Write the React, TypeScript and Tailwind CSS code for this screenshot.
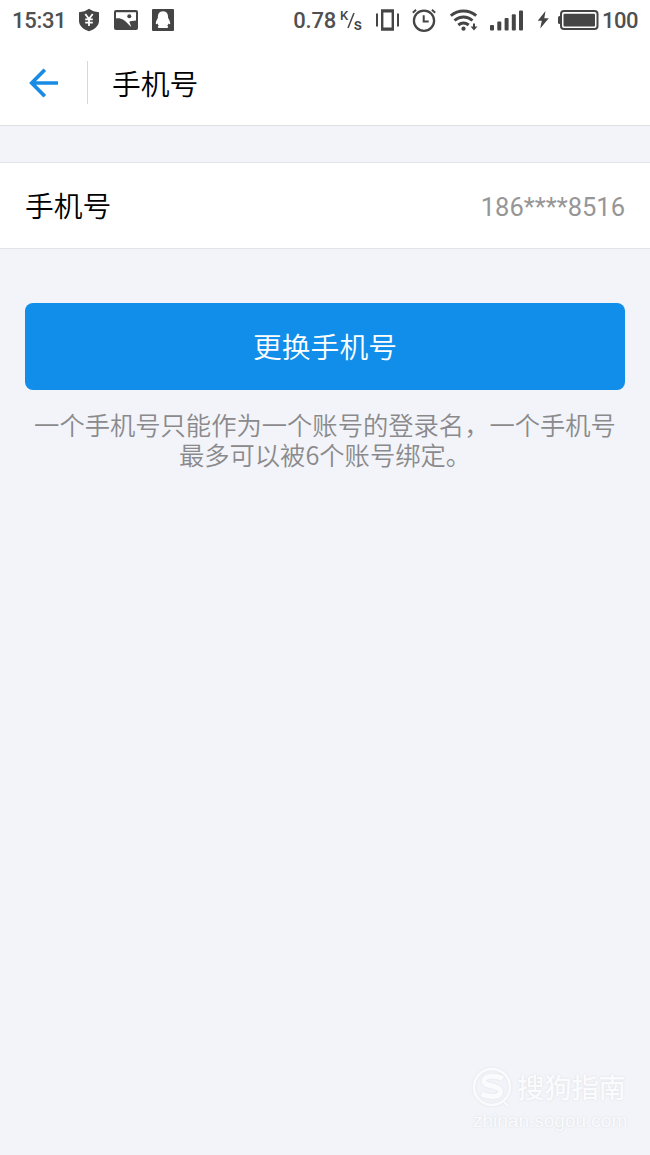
import type { ReactNode } from "react";

function ShieldIcon() {
  return (
    <svg className="ml-[11px] h-[24px] w-[22px]" viewBox="0 0 22 24" fill="none">
      <path d="M11 .8C8.500 2.800 4.600 4 1 4.200V13c0 5.200 5 8.600 10 10.300C16 21.600 21 18.200 21 13V4.200C17.400 4 13.500 2.800 11 .8Z" fill="#454545" />
      <path d="m7.300 6 3.700 5 3.700-5M7.200 11.400h7.600M7.200 14.600h7.600M11 11v7" stroke="#fff" strokeWidth="1.800" />
    </svg>
  );
}

function PictureIcon() {
  return (
    <svg className="ml-[14px] h-[20px] w-[24px]" viewBox="0 0 24 20">
      <rect width="24" height="20" rx="2" fill="#454545" />
      <path d="M2 2.300h20v8.200l-6 .8c-.8.700-.5 1.300 0 2.300l1.200 3.400C14.500 14.800 13 12 9.800 10 7 8.300 4.500 8 2 8.400Z" fill="#fff" />
      <circle cx="15.300" cy="6.300" r="2" fill="#454545" />
    </svg>
  );
}

function PenguinIcon() {
  return (
    <svg className="ml-[14px] h-[22px] w-[22px]" viewBox="0 0 22 22">
      <rect width="22" height="22" rx="1" fill="#454545" />
      <path d="M11 2.200c-3.700 0-5.300 2.800-5.100 6.600-.9 1.800-2.100 3.900-2.100 5.500 0 1.200.6 1.400 1.700.3.300.9.700 1.600 1.300 2.200-1.300.6-1.500 2.200.4 2.200h7.600c1.900 0 1.700-1.600.4-2.200.6-.6 1-1.300 1.300-2.200 1.100 1.100 1.700.9 1.700-.3 0-1.600-1.200-3.700-2.100-5.500.2-3.800-1.400-6.600-5.100-6.600Z" fill="#fff" />
    </svg>
  );
}

function RateUnit() {
  return (
    <svg className="ml-[4px] h-[24px] w-[23px]" viewBox="0 0 23 24" fontFamily="Roboto, sans-serif" fontWeight="500" fill="#454545">
      <text x="0" y="11.500" fontSize="13">K</text>
      <path d="m8 20 6-15" stroke="#454545" strokeWidth="1.500" />
      <text x="13.700" y="21.500" fontSize="16">s</text>
    </svg>
  );
}

function VibrateIcon() {
  return (
    <svg className="ml-[13px] h-[22px] w-[23px]" viewBox="0 0 23 22" fill="none" stroke="#454545">
      <path d="M1 4.500v13M22 4.500v13" strokeWidth="2" />
      <path d="M5 1.900h13M5 20.100h13" strokeWidth="3.400" />
      <path d="M6.200 1v20M16.800 1v20" strokeWidth="2.400" />
    </svg>
  );
}

function AlarmIcon() {
  return (
    <svg className="ml-[12px] h-[25px] w-[26px]" viewBox="0 0 26 25" fill="none" stroke="#454545">
      <circle cx="13" cy="12.700" r="10.100" strokeWidth="2.300" />
      <path d="M12.700 7.200v6.200h5" strokeWidth="2" />
      <path d="m1.800 4.800 3.300-3M24.200 4.800l-3.300-3" strokeWidth="1.900" />
    </svg>
  );
}

function WifiIcon() {
  return (
    <svg className="ml-[13px] h-[24px] w-[29px]" viewBox="0 0 29 24" fill="none" stroke="#454545">
      <path d="M.8 7.700c7.500-6.300 17.900-6.300 25.400 0" strokeWidth="2.900" />
      <path d="M4.500 12.500c5.400-4.700 12.600-4.700 18 0" strokeWidth="2.900" />
      <path d="M8.300 17c3.200-2.600 7.200-2.600 10.400 0" strokeWidth="2.900" />
      <circle cx="13.500" cy="20.700" r="2.100" fill="#454545" stroke="none" />
      <path d="M24 15.500v5" strokeWidth="2" />
      <path d="M20.600 18.500h6.800L24 22.500Z" fill="#454545" stroke="none" />
    </svg>
  );
}

function SignalIcon() {
  return (
    <svg className="ml-[11px] h-[21px] w-[34px]" viewBox="0 0 34 21" fill="#454545">
      <rect x="0" y="15" width="4" height="5.500" rx="1" />
      <rect x="7.300" y="11.500" width="4" height="9" rx="1" />
      <rect x="14.600" y="8" width="4" height="12.500" rx="1" />
      <rect x="21.800" y="4.200" width="4" height="16.300" rx="1" />
      <rect x="29" y=".5" width="4" height="20" rx="1" />
    </svg>
  );
}

function BatteryIcon() {
  return (
    <svg className="ml-[13px] h-[22px] w-[62px]" viewBox="0 0 62 22" fill="#454545">
      <path d="M8.500 2 .7 11.800h4.100L3.200 19.500 11.800 9.200H7.300Z" />
      <rect x="21" y="7" width="4" height="8" rx="1.500" />
      <rect x="24" y="2" width="36.500" height="18" rx="3" fill="#fff" stroke="#454545" strokeWidth="2" />
      <rect x="26.500" y="4.800" width="31.500" height="12.600" rx="1" />
    </svg>
  );
}

function StatusBar() {
  return (
    <div className="flex h-10 items-center pl-[12px] font-[Roboto,sans-serif] text-[22px] font-medium leading-none text-[#505050]">
      <span className="w-[55px] pt-px tracking-[-0.3px]">15:31</span>
      <ShieldIcon />
      <PictureIcon />
      <PenguinIcon />
      <span className="ml-auto pt-px tracking-[-0.200px]">0.78</span>
      <RateUnit />
      <VibrateIcon />
      <AlarmIcon />
      <WifiIcon />
      <SignalIcon />
      <BatteryIcon />
      <span className="ml-[3px] mr-[12px] w-[36px] pt-px tracking-[-0.500px]">100</span>
    </div>
  );
}

function Header({ children }: { children: ReactNode }) {
  return (
    <header className="flex h-[86px] items-center border-b border-[#dedfe1] pl-[29px]">
      <svg className="h-[30px] w-[30px]" viewBox="0 0 30 30" fill="none" stroke="#188ce4" strokeWidth="3.700">
        <path d="M15.800 1.700 2.700 15l13.100 13.300M3 15h26" />
      </svg>
      <div className="ml-[28px] h-[43px] w-px bg-[#d8d8d8]" />
      <h1 className="ml-[24px] text-[28.800px] font-[350]">{children}</h1>
    </header>
  );
}

function Watermark() {
  return (
    <div className="ml-auto mr-[22px] w-[156px] text-[#fafbfd] [text-shadow:0_0_2px_#d6d8dd]">
      <div className="flex items-center">
        <svg className="h-[40px] w-[40px] overflow-visible drop-shadow-[0_0_1px_#dfe1e6]" viewBox="0 0 40 40" fill="none" stroke="#fafbfd">
          <circle cx="20" cy="20" r="18" strokeWidth="2.500" />
          <path d="M31 11.500c-8-3.500-19-3-19 2.500 0 6 16.500 4 16.500 10.500 0 6-10.500 6.500-19 2.500" strokeWidth="5" />
          <path d="m32 35 4 4" strokeWidth="2" />
        </svg>
        <span className="ml-[5px] -mt-[2px] whitespace-nowrap text-[27.500px] font-medium leading-[40px] tracking-[-0.300px]">搜狗指南</span>
      </div>
      <div className="ml-px mt-[2px] whitespace-nowrap font-['Liberation_Sans',sans-serif] text-[19px] leading-[24px]">zhinan.sogou.com</div>
    </div>
  );
}

export default function App() {
  return (
    <div className="flex h-[1155px] w-[650px] flex-col overflow-hidden bg-[#f3f4f9] font-['Noto_Sans_CJK_SC',sans-serif] text-black">
      <div className="bg-white">
        <StatusBar />
        <Header>手机号</Header>
      </div>
      <main className="flex flex-1 flex-col pt-[36px]">
        <section className="flex h-[87px] items-center justify-between border-y border-[#e3e4e7] bg-white px-[25px]">
          <span className="pb-[2px] text-[28.800px] font-[350]">手机号</span>
          <span className="pt-[3px] font-[Roboto,sans-serif] text-[25.500px] font-normal text-[#969696]">186****8516</span>
        </section>
        <button className="mx-[25px] mt-[54px] h-[87px] rounded-lg bg-[#108ee9] pb-[2px] text-[28.800px] font-[350] text-white">更换手机号</button>
        <p className="mt-[19px] text-center text-[25.300px] font-[350] leading-[30px] text-[#8a8a8c]">
          一个手机号只能作为一个账号的登录名，一个手机号
          <br />
          最多可以被6个账号绑定。
        </p>
        <div className="mt-auto pb-[22px]">
          <Watermark />
        </div>
      </main>
    </div>
  );
}
